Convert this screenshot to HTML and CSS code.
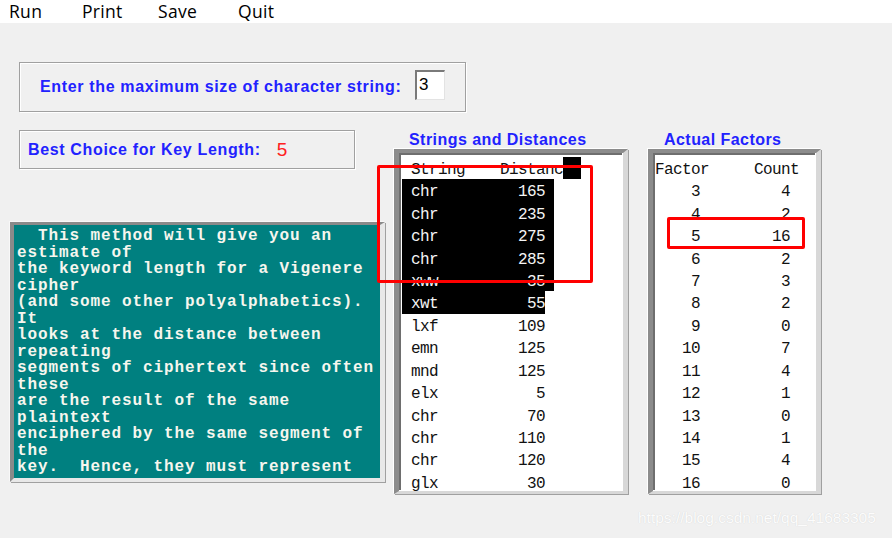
FILE: index.html
```html
<!DOCTYPE html>
<html>
<head>
<meta charset="utf-8">
<link rel="stylesheet" href="styles.css">
</head>
<body>
<div class="menubar">
  <span class="menu m-run">Run</span>
  <span class="menu m-print">Print</span>
  <span class="menu m-save">Save</span>
  <span class="menu m-quit">Quit</span>
</div>
<div class="main">
  <div class="panel p1">
    <span class="label">Enter the maximum size of character string:</span>
    <span class="input">3</span>
  </div>
  <div class="row2">
    <div class="leftcol">
      <div class="panel p2">
        <span class="label">Best Choice for Key Length:</span>
        <span class="val">5</span>
      </div>
      <div class="info"><pre class="infotext">  This method will give you an
estimate of
the keyword length for a Vigenere
cipher
(and some other polyalphabetics).
It
looks at the distance between
repeating
segments of ciphertext since often
these
are the result of the same
plaintext
enciphered by the same segment of
the
key.  Hence, they must represent</pre></div>
    </div>
    <div class="group g1">
      <div class="gtitle">Strings and Distances</div>
      <div class="listbox lb1">
        <div class="hrow"><span class="hname">String</span><span>Distance</span><span class="hsel"></span></div>
        <div class="row sel wide"><span>chr</span><span>165</span></div>
        <div class="row sel wide"><span>chr</span><span>235</span></div>
        <div class="row sel wide"><span>chr</span><span>275</span></div>
        <div class="row sel wide"><span>chr</span><span>285</span></div>
        <div class="row sel wide"><span>xww</span><span>35</span></div>
        <div class="row sel"><span>xwt</span><span>55</span></div>
        <div class="row"><span>lxf</span><span>109</span></div>
        <div class="row"><span>emn</span><span>125</span></div>
        <div class="row"><span>mnd</span><span>125</span></div>
        <div class="row"><span>elx</span><span>5</span></div>
        <div class="row"><span>chr</span><span>70</span></div>
        <div class="row"><span>chr</span><span>110</span></div>
        <div class="row"><span>chr</span><span>120</span></div>
        <div class="row"><span>glx</span><span>30</span></div>
      </div>
    </div>
    <div class="group g2">
      <div class="gtitle">Actual Factors</div>
      <div class="listbox lb2">
        <div class="hrow2"><span>Factor</span><span class="hcount">Count</span></div>
        <div class="frow"><span>3</span><span>4</span></div>
        <div class="frow"><span>4</span><span>2</span></div>
        <div class="frow"><span>5</span><span>16</span></div>
        <div class="frow"><span>6</span><span>2</span></div>
        <div class="frow"><span>7</span><span>3</span></div>
        <div class="frow"><span>8</span><span>2</span></div>
        <div class="frow"><span>9</span><span>0</span></div>
        <div class="frow"><span>10</span><span>7</span></div>
        <div class="frow"><span>11</span><span>4</span></div>
        <div class="frow"><span>12</span><span>1</span></div>
        <div class="frow"><span>13</span><span>0</span></div>
        <div class="frow"><span>14</span><span>1</span></div>
        <div class="frow"><span>15</span><span>4</span></div>
        <div class="frow"><span>16</span><span>0</span></div>
      </div>
    </div>
  </div>
</div>
<div class="redbox rb1"></div>
<div class="redbox rb2"></div>
<div class="watermark">https://blog.csdn.net/qq_41683305</div>
</body>
</html>
```
FILE: styles.css
```css
* { box-sizing: border-box; }
html, body { margin: 0; padding: 0; }
body {
  background: #f0f0f0;
  width: 892px;
  height: 538px;
  overflow: hidden;
  position: relative;
  font-family: "Liberation Sans", Arial, sans-serif;
}
.menubar {
  height: 23px;
  background: #ffffff;
  display: flex;
  padding-left: 9px;
  font-family: "Open Sans", "Noto Sans", sans-serif;
  font-size: 17.5px;
  line-height: 22px;
  color: #000;
  letter-spacing: 0.3px;
}
.m-run { width: 73px; }
.m-print { width: 76px; }
.m-save { width: 80px; }

.main { padding-top: 39px; }
.panel {
  border: 1px solid #a0a0a0;
  box-shadow: inset 1px 1px 0 #ffffff, 1px 1px 0 #ffffff;
  display: flex;
  align-items: center;
}
.label {
  font-weight: bold;
  color: #2222ff;
  font-size: 16px;
  letter-spacing: 0.65px;
}
.p1 {
  margin-left: 19px;
  width: 447px;
  height: 50px;
  padding: 0 20px 0 20px;
}
.p1 .input {
  margin-left: auto;
  margin-top: -4px;
  width: 30px;
  height: 30px;
  background: #fff;
  border-style: solid;
  border-width: 2px 1px 1px 2px;
  border-color: #7a7a7a #e3e3e3 #e3e3e3 #7a7a7a;
  font-size: 17px;
  line-height: 25px;
  padding-left: 2px;
  color: #000;
}
.row2 {
  display: flex;
  margin-top: 18px;
}
.leftcol { width: 385px; }
.p2 {
  margin-left: 19px;
  width: 336px;
  height: 39px;
  padding-left: 8px;
}
.p2 .val {
  color: #ff2020;
  font-size: 19px;
  margin-left: 16px;
}
.info {
  margin-top: 53px;
  margin-left: 10px;
  width: 375px;
  height: 260px;
  background: #008080;
  border-style: solid;
  border-width: 3px 5px 4px 4px;
  border-color: #8a8a8a #e8e8e8 #e8e8e8 #8a8a8a;
  box-shadow: -1px -1px 0 #f8f8f8, 1px 1px 0 #a0a0a0;
  padding: 3px 0 0 3px;
  overflow: hidden;
}
.infotext {
  margin: 0;
  font-family: "Liberation Mono", "Courier New", monospace;
  font-weight: bold;
  font-size: 16px;
  letter-spacing: 0.9px;
  line-height: 16.5px;
  color: #f6f6ee;
}
.group { display: flex; flex-direction: column; }
.g1 { margin-left: 9px; width: 234px; }
.g2 { margin-left: 20px; width: 173px; }
.gtitle {
  height: 19px;
  line-height: 19px;
  font-weight: bold;
  color: #2222ff;
  font-size: 16px;
  letter-spacing: 0.45px;
}
.g1 .gtitle { padding-left: 15px; }
.g2 .gtitle { padding-left: 16px; }
.listbox {
  height: 345px;
  background: #fff;
  border-style: solid;
  border-width: 4px 5px 3px 5px;
  border-color: #8c8c8c #d8d8d8 #d8d8d8 #8c8c8c;
  box-shadow: -1px -1px 0 #ffffff, 1px 1px 0 #a0a0a0, inset -1px -1px 0 #ffffff, inset 2px 2px 0 #6e6e6e;
  font-family: "Liberation Mono", "Courier New", monospace;
  font-size: 16px;
  letter-spacing: -0.6px;
  color: #111;
  line-height: 18.45px;
  overflow: hidden;
}
.lb1 { padding: 3.8px 0 0 3px; }
.hrow, .row, .hrow2, .frow { height: 22.45px; padding-top: 4px; }
.hrow { position: relative; display: flex; padding-left: 9px; }
.hname { width: 89px; }
.hsel {
  position: absolute;
  left: 161px;
  top: 0;
  width: 18px;
  height: 22.45px;
  background: #000;
}
.row {
  display: flex;
  justify-content: space-between;
  width: 143px;
  padding-left: 9px;
}
.row.sel { background: #000; color: #f4f4f4; }
.row.wide { width: 152px; padding-right: 9px; }
.lb2 { padding: 3.8px 0 0 0; }
.hrow2 { padding-left: 2px; display: flex; }
.hcount { margin-left: 45px; }
.frow {
  display: grid;
  grid-template-columns: 47px 90px;
  justify-items: end;
}
.redbox {
  position: absolute;
  border: 3px solid #ff0000;
  border-radius: 2px;
}
.rb1 { left: 377px; top: 165px; width: 216px; height: 118px; }
.rb2 { left: 667px; top: 217px; width: 138px; height: 32px; }
.watermark {
  position: absolute;
  left: 638px;
  top: 509px;
  font-family: "Liberation Sans", Arial, sans-serif;
  font-size: 15.5px;
  color: #fcfcfc;
  text-shadow: 0 0 1px #cfcfcf;
}
```
